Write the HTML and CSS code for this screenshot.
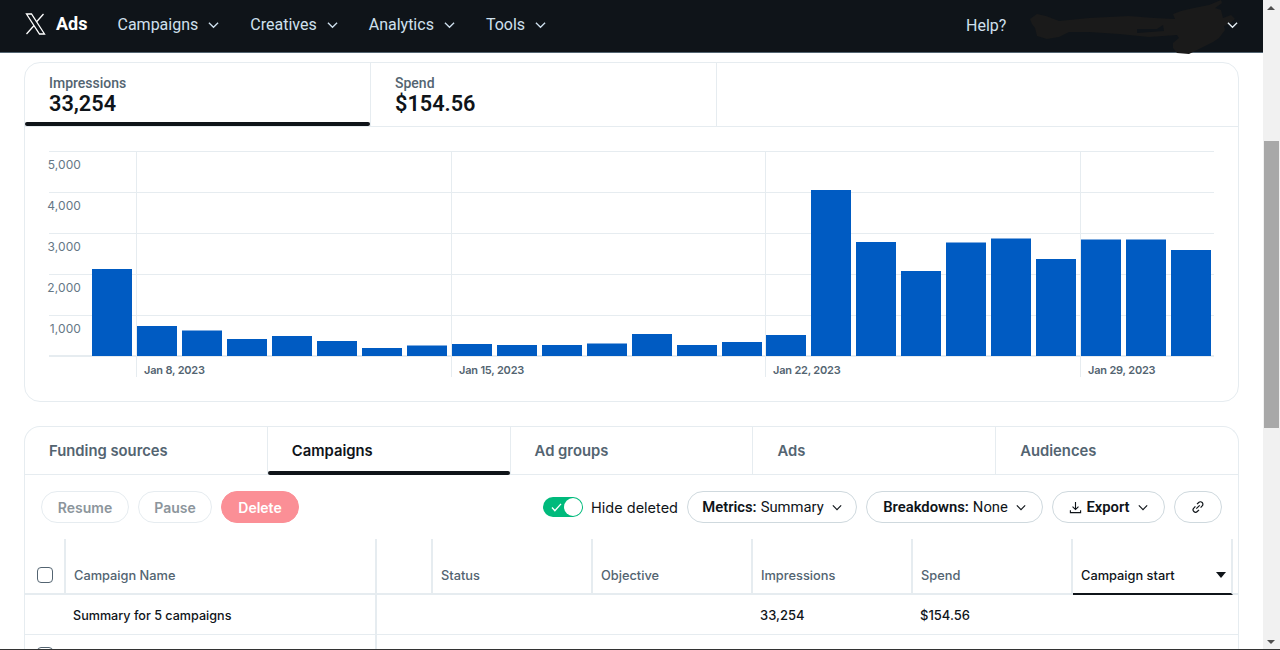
FILE: index.html
```html
<!DOCTYPE html>
<html lang="en">
<head>
<meta charset="utf-8">
<title>Ads</title>
<link rel="stylesheet" href="styles.css">
</head>
<body>
<div class="app">
  <main class="page">
    <header class="topbar">
      <svg class="logo" viewBox="0 0 21 22" width="21" height="22"><path class="logo-x" d="M1.500 1H6.500L19.500 21H14.500ZM18.500 1L11.200 9.300M9.300 12.300L1.500 21"/></svg>
      <span class="brand">Ads</span>
      <nav class="nav">
        <a class="nav-item">Campaigns<svg class="chev" viewBox="0 0 12 8"><path d="M1 1.5l5 5 5-5"/></svg></a>
        <a class="nav-item">Creatives<svg class="chev" viewBox="0 0 12 8"><path d="M1 1.5l5 5 5-5"/></svg></a>
        <a class="nav-item">Analytics<svg class="chev" viewBox="0 0 12 8"><path d="M1 1.5l5 5 5-5"/></svg></a>
        <a class="nav-item">Tools<svg class="chev" viewBox="0 0 12 8"><path d="M1 1.5l5 5 5-5"/></svg></a>
      </nav>
      <a class="help">Help?</a>
      <svg class="scribble" viewBox="0 0 210 56" width="210" height="56"><path fill="#1a1a1a" d="M1 19L8 14L17 16L30 21L60 18L100 16L125 18L146 19L144 14L152 11L165 8L180 5L192 0L193 3L186 8L192 10L194 18L202 15L206 19L200 24L195 26L196 30L190 38L184 42L176 46L168 50L160 54L148 53L144 48L144 43L150 38L148 35L120 37L90 34L60 32L40 32L30 37L18 39L8 36L6 28L3 24Z"/><path fill="#0f1419" d="M108 29H128L134 25L135 31L108 33Z"/></svg>
      <svg class="chev account-chev" viewBox="0 0 12 8"><path d="M1 1.5l5 5 5-5"/></svg>
    </header>

    <div class="content">
      <section class="card chart-card">
        <div class="metric-tabs">
          <div class="metric active"><span class="metric-label">Impressions</span><span class="metric-value">33,254</span></div>
          <div class="metric"><span class="metric-label">Spend</span><span class="metric-value">$154.56</span></div>
          <div class="metric-rest"></div>
        </div>
        <svg class="chart" viewBox="0 0 1213 274" width="1213" height="274">
          <g class="grid">
            <path d="M24 24.500H1189M24 65.500H1189M24 106.500H1189M24 147.500H1189M24 188.500H1189"/>
            <path d="M111.500 24V250M426.500 24V250M740.500 24V250M1055.500 24V250"/>
          </g>
          <path class="base" d="M24 229H1189"/>
          <g class="y-labels">
            <text x="56" y="41.500">5,000</text><text x="56" y="82.500">4,000</text><text x="56" y="123.500">3,000</text><text x="56" y="164.500">2,000</text><text x="56" y="205.500">1,000</text>
          </g>
          <g class="bars">
            <rect x="67" y="142" width="40" height="87"/><rect x="112" y="199" width="40" height="30"/><rect x="157" y="203.500" width="40" height="25.500"/><rect x="202" y="212" width="40" height="17"/><rect x="247" y="209" width="40" height="20"/>
            <rect x="292" y="214" width="40" height="15"/><rect x="337" y="221" width="40" height="8"/><rect x="382" y="218.500" width="40" height="10.500"/><rect x="427" y="217" width="40" height="12"/><rect x="472" y="218" width="40" height="11"/>
            <rect x="517" y="218" width="40" height="11"/><rect x="562" y="216.500" width="40" height="12.500"/><rect x="607" y="207" width="40" height="22"/><rect x="652" y="218" width="40" height="11"/><rect x="697" y="215" width="40" height="14"/>
            <rect x="741" y="208" width="40" height="21"/><rect x="786" y="63" width="40" height="166"/><rect x="831" y="115" width="40" height="114"/><rect x="876" y="144" width="40" height="85"/><rect x="921" y="115.500" width="40" height="113.500"/>
            <rect x="966" y="111.500" width="40" height="117.500"/><rect x="1011" y="132" width="40" height="97"/><rect x="1056" y="112.500" width="40" height="116.500"/><rect x="1101" y="112.500" width="40" height="116.500"/><rect x="1146" y="123" width="40" height="106"/>
          </g>
          <g class="x-labels">
            <text x="119" y="247">Jan 8, 2023</text><text x="434" y="247">Jan 15, 2023</text><text x="748" y="247">Jan 22, 2023</text><text x="1063" y="247">Jan 29, 2023</text>
          </g>
        </svg>
      </section>

      <section class="card table-card">
        <div class="entity-tabs">
          <div class="entity">Funding sources</div>
          <div class="entity active">Campaigns</div>
          <div class="entity">Ad groups</div>
          <div class="entity">Ads</div>
          <div class="entity">Audiences</div>
        </div>
        <div class="toolbar">
          <button class="btn disabled resume">Resume</button>
          <button class="btn disabled pause">Pause</button>
          <button class="btn danger">Delete</button>
          <div class="toolbar-right">
            <span class="toggle"><svg class="toggle-check" viewBox="0 0 12 10" width="11" height="9"><path d="M1 5l3.200 3.500L11 1"/></svg><span class="toggle-knob"></span></span>
            <span class="toggle-label">Hide deleted</span>
            <button class="btn pill metrics"><b>Metrics:</b> Summary<svg class="chev dark" viewBox="0 0 12 8"><path d="M1 1.5l5 5 5-5"/></svg></button>
            <button class="btn pill breakdowns"><b>Breakdowns:</b> None<svg class="chev dark" viewBox="0 0 12 8"><path d="M1 1.5l5 5 5-5"/></svg></button>
            <button class="btn pill export"><svg class="icon" viewBox="0 0 14 14" width="13" height="13"><path d="M7 1v8M3.800 6L7 9.200 10.200 6M1.500 10v2.500h11V10"/></svg><b>Export</b><svg class="chev dark" viewBox="0 0 12 8"><path d="M1 1.5l5 5 5-5"/></svg></button>
            <button class="btn pill link"><svg class="icon" viewBox="0 0 14 14" width="14" height="14"><path d="M6 4.200l1.700-1.700a2.400 2.400 0 0 1 3.500 3.400L9.600 7.600M8 9.800l-1.700 1.700a2.400 2.400 0 0 1-3.500-3.400l1.600-1.700M5.300 8.700l3.400-3.400"/></svg></button>
          </div>
        </div>
        <div class="row head">
          <div class="cell check"><span class="checkbox"></span></div>
          <div class="cell name">Campaign Name</div>
          <div class="cell"></div>
          <div class="cell">Status</div>
          <div class="cell">Objective</div>
          <div class="cell">Impressions</div>
          <div class="cell">Spend</div>
          <div class="cell sorted">Campaign start<span class="sort-arrow"></span></div>
          <div class="cell tail"></div>
        </div>
        <div class="row summary">
          <div class="cell check"></div>
          <div class="cell name">Summary for 5 campaigns</div>
          <div class="cell"></div>
          <div class="cell"></div>
          <div class="cell"></div>
          <div class="cell">33,254</div>
          <div class="cell">$154.56</div>
          <div class="cell"></div>
          <div class="cell tail"></div>
        </div>
        <div class="row next">
          <div class="cell check"><span class="checkbox"></span></div>
          <div class="cell name"></div>
        </div>
      </section>
    </div>
  </main>
  <aside class="scrollbar">
    <span class="arrow up"></span>
    <span class="thumb"></span>
    <span class="arrow down"></span>
  </aside>
  <div class="edge"></div>
</div>
</body>
</html>
```

FILE: styles.css
```css
* { box-sizing: border-box; }
html, body { margin: 0; height: 100%; overflow: hidden; background: #fff; }
body { font-family: Inter, "Liberation Sans", sans-serif; color: #0f1419; }
.app { display: flex; height: 650px; width: 1280px; position: relative; overflow: hidden; }
.page { width: 1263px; flex: none; height: 650px; overflow: hidden; }

.topbar { height: 53px; background: #0f1419; border-bottom: 1px solid #536471; display: flex; align-items: center; padding-left: 25px; position: relative; font-family: Roboto, sans-serif; }
.logo { flex: none; margin-top: -5px; }
.logo-x { fill: none; stroke: #fff; stroke-width: 1.300; }
.brand { color: #fff; font-weight: 700; font-size: 18px; margin: -6px 0 0 10px; }
.nav { display: flex; margin-left: 30px; gap: 31px; margin-top: -3px; }
.nav-item { color: #cfe0ee; font-size: 16px; display: flex; align-items: center; gap: 10px; }
.chev { width: 11px; height: 8px; fill: none; stroke: #cfe0ee; stroke-width: 1.400; flex: none; }
.chev.dark { stroke: #0f1419; }
.help { color: #cfe0ee; font-size: 16px; position: absolute; left: 966px; top: 16px; }
.account-chev { position: absolute; left: 1227px; top: 21px; stroke: #e7f0f7; }
.scribble { position: absolute; left: 1029px; top: 0; }

.content { padding: 9px 24px 0; }
.card { border: 1px solid #e6ecf0; border-radius: 16px; background: #fff; }
.chart-card { height: 340px; }
.metric-tabs { display: flex; height: 64px; border-bottom: 1px solid #e6ecf0; }
.metric { width: 346px; padding: 12px 24px 0; border-right: 1px solid #e6ecf0; display: flex; flex-direction: column; position: relative; font-family: Roboto, sans-serif; }
.metric.active::after { content: ""; position: absolute; left: 0; right: 0; bottom: 0; height: 4px; background: #0f1419; border-radius: 2px; }
.metric-rest { flex: 1; }
.metric-label { font-size: 14px; font-weight: 500; color: #536471; line-height: 17px; }
.metric-value { font-size: 21.700px; font-weight: 600; line-height: 24px; color: #0f1419; }
.chart { display: block; }
.grid path { stroke: #e6ecf0; stroke-width: 1; fill: none; }
.base { stroke: #e6ecf0; stroke-width: 2; fill: none; }
.y-labels text { font: 400 12px Inter, sans-serif; letter-spacing: .1px; fill: #657786; text-anchor: end; }
.x-labels text { font: 600 11px Inter, sans-serif; letter-spacing: -.2px; fill: #536471; }
.bars rect { fill: #005bc2; }

.table-card { margin-top: 24px; height: 300px; border-bottom: 0; border-radius: 16px 16px 0 0; }
.entity-tabs { display: flex; height: 48px; border-bottom: 1px solid #e6ecf0; }
.entity { width: 243px; padding: 1px 0 0 24px; border-left: 1px solid #e6ecf0; font-size: 14.800px; font-weight: 600; color: #536471; display: flex; align-items: center; position: relative; }
.entity:first-child { border-left: 0; width: 242px; }
.entity.active { color: #0f1419; }
.entity.active::after { content: ""; position: absolute; left: 0; right: 0; bottom: -1px; height: 4px; background: #0f1419; border-radius: 2px; }

.toolbar { display: flex; align-items: center; gap: 9px; height: 32px; margin: 16px; }
.btn { height: 32px; border: 1px solid #cfd9de; border-radius: 16px; background: #fff; font: 600 14px Inter, sans-serif; color: #0f1419; padding: 0; display: inline-flex; align-items: center; justify-content: center; white-space: nowrap; }
.btn.disabled { color: #8c959c; border-color: #e6ecf0; }
.resume { width: 88px; }
.pause { width: 74px; }
.btn.danger { width: 78px; background: #fb8f96; border-color: #fb8f96; color: #fff; }
.toolbar-right { margin-left: auto; display: flex; align-items: center; gap: 9px; }
.toggle { width: 40px; height: 20px; border-radius: 10px; background: #00ba7c; display: flex; align-items: center; padding: 0 1px 0 8px; justify-content: space-between; margin-right: -1px; }
.toggle-check { fill: none; stroke: #fff; stroke-width: 1.500; }
.toggle-knob { width: 18px; height: 18px; border-radius: 50%; background: #fff; }
.toggle-label { font-size: 14.500px; color: #0f1419; }
.pill { font-weight: 400; font-family: Roboto, sans-serif; font-size: 14.800px; gap: 4px; }
.pill b { font-weight: 600; }
.pill .chev { width: 10px; height: 7px; margin-left: 4px; }
.metrics { width: 170px; }
.breakdowns { width: 177px; }
.export { width: 113px; }
.link { width: 48px; }
.icon { fill: none; stroke: #0f1419; stroke-width: 1.200; flex: none; }

.row { display: grid; grid-template-columns: 41px 311px 56px repeat(5, 160px) 1fr; font-size: 13px; }
.cell { display: flex; align-items: center; padding-left: 8px; white-space: nowrap; }
.head { height: 56px; border-bottom: 2px solid #e6ecf0; color: #536471; font-weight: 500; font-size: 12.800px; }
.head .cell { border-right: 2px solid #e6ecf0; padding-top: 18px; }
.head .cell:first-child { padding-left: 12px; }
.head .tail { border-right: 0; }
.head .sorted { color: #0f1419; border-bottom: 2px solid #0f1419; margin-bottom: -2px; position: relative; }
.sort-arrow { position: absolute; right: 5px; top: 33px; border-left: 5px solid transparent; border-right: 5px solid transparent; border-top: 6px solid #0f1419; }
.checkbox { width: 16px; height: 16px; border: 1.500px solid #536471; border-radius: 4px; display: block; flex: none; }
.summary { height: 40px; border-bottom: 1px solid #e6ecf0; font-weight: 500; }
.summary .cell { padding: 1px 0 0 7px; }
.summary .name { border-right: 2px solid #e6ecf0; font-size: 12.600px; }
.next { height: 20px; }
.next .check { padding: 12px 0 0 12px; align-items: flex-start; }
.next .name { border-right: 2px solid #e6ecf0; }

.scrollbar { width: 17px; flex: none; background: #f1f1f1; height: 650px; position: relative; }
.arrow { width: 0; height: 0; border-left: 4px solid transparent; border-right: 4px solid transparent; position: absolute; left: 4px; }
.arrow.up { top: 6px; border-bottom: 4px solid #505050; }
.arrow.down { bottom: 6px; border-top: 4px solid #505050; }
.thumb { position: absolute; top: 141px; left: 1px; width: 15px; height: 287px; background: #a8a8a8; }
.edge { position: absolute; left: 0; right: 0; bottom: 0; height: 1px; background: #333; }
```
